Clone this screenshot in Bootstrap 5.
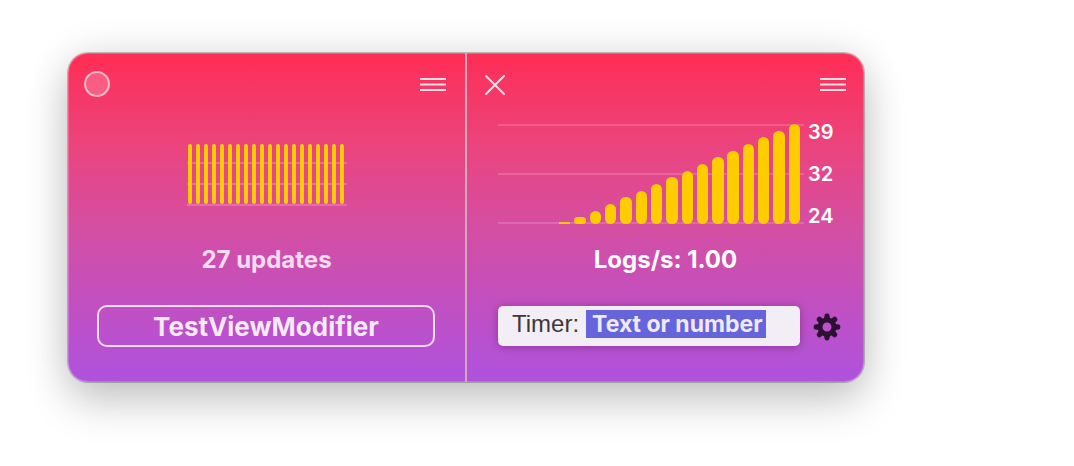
<!DOCTYPE html>
<html lang="en">
<head>
<meta charset="utf-8">
<meta name="viewport" content="width=device-width, initial-scale=1">
<title>Monitor</title>
<link href="https://cdn.jsdelivr.net/npm/bootstrap@5.3.0/dist/css/bootstrap.min.css" rel="stylesheet">
<style>
  body { font-family: Inter, Roboto, sans-serif; background: #fff; }
  .stage { padding: 53px 210px 84px 68px; }
  .monitor {
    border-radius: 20px;
    background: linear-gradient(#ff2d55, #eb447d 28%, #d54ea3 53%, #c050c3 78%, #af52de);
    box-shadow: 0 0 0 1px rgba(0,0,0,.22), 0 20px 44px rgba(0,0,0,.2), 0 0 40px rgba(0,0,0,.1),
      inset 0 0 0 1px rgba(255,255,255,.2);
  }
  .pane { flex: 1 1 0; min-width: 0; }
  .pane + .pane { border-left: 2px solid #d3a9b9; }
  .pane-head { padding: 18px 18px 0 16px; height: 44px; }
  .plot { height: 140px; }
  .plot-wide { padding: 27px 30px 0 31px; }
  .plot-wide svg { height: 100px; }
  .plot-small svg { width: 160px; height: 63px; margin-top: 46px; }
  .scale { font-size: 20px; line-height: 20px; font-weight: 600; width: 30px; padding: 0 0 0 4px; height: 104px; margin-top: -2px; }
  .caption { font-size: 24px; line-height: 32px; font-weight: 700; padding-top: 7px; height: 38px; }
  .dim { opacity: .8; }
  .pane-foot { padding: 30px 30px 34px 29px; height: 107px; }
  .name-btn { height: 42px; border: 2px solid rgba(255,255,255,.8); border-radius: 10px; color: rgba(255,255,255,.88);
    font-size: 26px; line-height: 36px; font-weight: 700; padding: 2px 0 0; }
  .name-btn:hover { color: #fff; border-color: #fff; }
  .icon-btn { border: 0; background: none; padding: 0; color: rgba(255,255,255,.85); line-height: 0; }
  .field { height: 40px; border-radius: 5px; background: #f3edf5; box-shadow: 0 1px 8px rgba(60,0,60,.35); padding: 0 14px 4px; font-size: 24px; color: #3d373e; }
  .field label { font-family: "Liberation Sans", Arial, sans-serif; line-height: 32px; }
  .field input { width: 180px; height: 28px; border: 0; border-radius: 0; background: #6664da; color: #f0e9fa; font-weight: 700;
    font-size: 23px; line-height: 28px; padding: 1px 2px 0 6px; outline: 0; margin-left: 7px; }
  .right-foot { padding: 28px 23px 34px 31px; gap: 14px; }
  .right-head { padding-right: 17px; }
</style>
</head>
<body>
<main class="stage">
  <div class="monitor d-flex">
    <section class="pane d-flex flex-column">
      <div class="pane-head d-flex justify-content-between align-items-center">
        <button class="icon-btn" type="button" aria-label="Record">
          <svg width="26" height="26"><circle cx="13" cy="13" r="12" fill="#fff" fill-opacity=".2" stroke="#fff" stroke-opacity=".62" stroke-width="2"/></svg>
        </button>
        <button class="icon-btn" type="button" aria-label="Menu">
          <svg width="27" height="16" stroke="currentColor" stroke-width="2"><path d="M0 3h26M0 8.5h26M0 14h26"/></svg>
        </button>
      </div>
      <div class="plot plot-small text-center">
        <svg viewBox="0 0 160 63" role="img" aria-label="Updates chart">
          <path d="M0 20h160M0 41h160M0 62h160" stroke="#fff" stroke-opacity=".2" stroke-width="2"/>
          <path d="M3 3v56m8-56v56m8-56v56m8-56v56m8-56v56m8-56v56m8-56v56m8-56v56m8-56v56m8-56v56m8-56v56m8-56v56m8-56v56m8-56v56m8-56v56m8-56v56m8-56v56m8-56v56m8-56v56m8-56v56" stroke="#fc0" stroke-width="4" stroke-linecap="round" fill="none"/>
        </svg>
      </div>
      <div class="caption dim text-white text-center">27 updates</div>
      <div class="pane-foot">
        <button class="btn name-btn w-100" type="button">TestViewModifier</button>
      </div>
    </section>
    <section class="pane d-flex flex-column">
      <div class="pane-head right-head d-flex justify-content-between align-items-center">
        <button class="icon-btn" type="button" aria-label="Close">
          <svg width="24" height="24" stroke="currentColor" stroke-width="2" stroke-linecap="round"><path d="M3 4l18 18M21 4L3 22"/></svg>
        </button>
        <button class="icon-btn" type="button" aria-label="Menu">
          <svg width="27" height="16" stroke="currentColor" stroke-width="2"><path d="M0 3h26M0 8.5h26M0 14h26"/></svg>
        </button>
      </div>
      <div class="plot plot-wide d-flex">
        <svg class="flex-grow-1" viewBox="0 0 306 100" preserveAspectRatio="none" role="img" aria-label="Logs per second chart">
          <path d="M0 1h306M0 50h306M0 99h306" stroke="#fff" stroke-opacity=".16" stroke-width="2"/>
          <g fill="#fc0">
            <rect x="61" y="98" width="11" height="2"/>
            <rect x="76" y="93" width="12" height="7" rx="3.5"/>
            <rect x="92" y="87" width="11" height="13" rx="5.5"/>
            <rect x="107" y="80" width="11" height="20" rx="5.5"/>
            <rect x="122" y="73" width="12" height="27" rx="5.5"/>
            <rect x="138" y="67" width="11" height="33" rx="5.5"/>
            <rect x="153" y="60" width="11" height="40" rx="5.5"/>
            <rect x="168" y="53" width="12" height="47" rx="5.5"/>
            <rect x="184" y="47" width="11" height="53" rx="5.5"/>
            <rect x="199" y="40" width="11" height="60" rx="5.5"/>
            <rect x="214" y="33" width="12" height="67" rx="5.5"/>
            <rect x="229" y="27" width="12" height="73" rx="5.5"/>
            <rect x="245" y="20" width="11" height="80" rx="5.5"/>
            <rect x="260" y="13" width="11" height="87" rx="5.5"/>
            <rect x="275" y="7" width="12" height="93" rx="5.5"/>
            <rect x="291" y="0" width="11" height="100" rx="5.5"/>
          </g>
        </svg>
        <div class="scale text-white d-flex flex-column justify-content-between"><span>39</span><span>32</span><span>24</span></div>
      </div>
      <div class="caption text-white text-center">Logs/s: 1.00</div>
      <div class="pane-foot right-foot d-flex align-items-center justify-content-between">
        <div class="field d-flex align-items-center flex-grow-1">
          <label for="timer">Timer:</label>
          <input id="timer" type="text" value="Text or number">
        </div>
        <button class="icon-btn" type="button" aria-label="Settings">
          <svg width="27" height="28" viewBox="-13 -15 27 28" overflow="visible">
            <defs><path id="tooth" d="M-3-8L-2.4-12Q-2.1-13.4 0-13.4T2.4-12L3-8Z"/></defs>
            <g fill="#2d1132">
              <use href="#tooth"/><use href="#tooth" transform="rotate(45)"/><use href="#tooth" transform="rotate(90)"/><use href="#tooth" transform="rotate(135)"/>
              <use href="#tooth" transform="rotate(180)"/><use href="#tooth" transform="rotate(225)"/><use href="#tooth" transform="rotate(270)"/><use href="#tooth" transform="rotate(315)"/>
            </g>
            <circle r="7" fill="none" stroke="#2d1132" stroke-width="5"/>
          </svg>
        </button>
      </div>
    </section>
  </div>
</main>
<script src="https://cdn.jsdelivr.net/npm/bootstrap@5.3.0/dist/js/bootstrap.bundle.min.js"></script>
</body>
</html>
